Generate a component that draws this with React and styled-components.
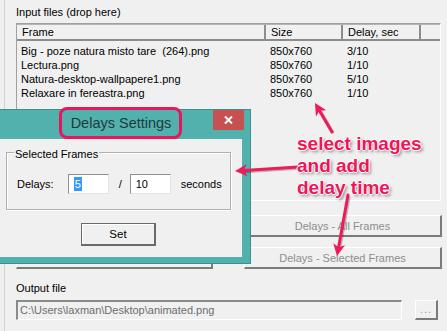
import React from 'react';
import styled, { createGlobalStyle } from 'styled-components';

const GlobalStyle = createGlobalStyle`
  html, body {
    margin: 0;
    padding: 0;
    background: #f0f0f0;
  }
  body {
    font-family: "Liberation Sans", Arial, sans-serif;
    font-size: 11px;
    color: #000;
  }
`;

const Page = styled.div`
  position: relative;
  width: 447px;
  height: 331px;
  overflow: hidden;
  background: #f0f0f0;
`;

const Panel = styled.div`
  margin-left: 4px;
  height: 331px;
  box-sizing: border-box;
  border-left: 1px solid #d3d3d3;
  padding: 6px 0 0 11px;
`;

const Label = styled.div`
  height: 13px;
  line-height: 13px;
  margin-top: ${p => p.$top || 0}px;
`;

const ListBox = styled.div`
  margin-top: 4px;
  width: 425px;
  height: 178px;
  box-sizing: border-box;
  border: 1px solid #fff;
  border-top-color: #a0a0a0;
  border-left-color: #a0a0a0;
`;

const cols = '249px 77px 78px 1fr';

const Header = styled.div`
  display: grid;
  grid-template-columns: ${cols};
  height: 17px;
  box-sizing: border-box;
  border-top: 1px solid #b4b4b4;
  border-bottom: 2px solid #8c8c8c;
`;

const HeadCell = styled.div`
  padding-left: 5px;
  line-height: 14px;
  border-right: ${p => (p.$last ? 'none' : '2px solid #8c8c8c')};
  white-space: nowrap;
`;

const Rows = styled.div`
  margin-top: 3px;
`;

const Row = styled.div`
  display: grid;
  grid-template-columns: ${cols};
  height: 14px;
  line-height: 14px;
`;

const Cell = styled.div`
  padding-left: 4px;
  white-space: pre;
`;

const ButtonGrid = styled.div`
  display: grid;
  grid-template-columns: 197px 198px;
  column-gap: 31px;
  row-gap: 10px;
  margin-top: 14px;
`;

const WinButton = styled.div`
  height: ${p => p.$h || 22}px;
  box-sizing: border-box;
  display: flex;
  align-items: center;
  justify-content: center;
  color: ${p => (p.$disabled ? '#8d8d8d' : '#000')};
  border-top: 1px solid #fff;
  border-left: 1px solid #fff;
  border-right: 2px solid #7a7a7a;
  border-bottom: 2px solid #7a7a7a;
  font-size: 11px;
`;

const OutputRow = styled.div`
  display: flex;
  gap: 13px;
  margin-top: 5px;
`;

const PathField = styled.div`
  width: 386px;
  height: 20px;
  box-sizing: border-box;
  border-top: 2px solid #8a8a8a;
  border-left: 2px solid #8a8a8a;
  border-right: 1px solid #fff;
  border-bottom: 1px solid #fff;
  color: #6d6d6d;
  line-height: 16px;
  padding-left: 2px;
`;

const DotsButton = styled(WinButton)`
  width: 23px;
  color: #9a9a9a;
  letter-spacing: 1px;
  padding-bottom: 2px;
`;

/* dialog window floating over the form */
const Dialog = styled.div`
  position: absolute;
  left: -10px;
  top: 109px;
  width: 261px;
  height: 155px;
  box-sizing: border-box;
  background: #52b0ad;
  border: 1px solid #3d8f8c;
  display: flex;
  flex-direction: column;
  z-index: 2;
`;

const TitleBar = styled.div`
  position: relative;
  height: 29px;
  display: flex;
  justify-content: center;
  align-items: flex-start;
`;

const Title = styled.div`
  margin-top: -3px;
  height: 32px;
  box-sizing: border-box;
  padding: 0 8px 0 9px;
  border: 3px solid #e8175d;
  border-radius: 8px;
  display: flex;
  align-items: center;
  font-size: 14.5px;
  color: #1f3a3b;
`;

const CloseButton = styled.div`
  position: absolute;
  right: 6px;
  top: 0;
  width: 31px;
  height: 20px;
  background: #c75050;
  display: flex;
  align-items: center;
  justify-content: center;
`;

const Client = styled.div`
  margin: 0 8px 6px 9px;
  height: 118px;
  background: #f0f0f0;
  display: flex;
  flex-direction: column;
`;

const Group = styled.div`
  position: relative;
  margin: 13px 11px 0 6px;
  height: 58px;
  box-sizing: border-box;
  border: 1px solid #b0b0b0;
  box-shadow: inset 1px 1px #fff, 1px 1px #fff;
  padding: 6px 0 0 10px;
  display: flex;
  align-items: center;
`;

const Legend = styled.div`
  position: absolute;
  top: -5px;
  left: 7px;
  padding: 0 1px;
  background: #f0f0f0;
  line-height: 13px;
`;

const FieldText = styled.span`
  margin-left: ${p => p.$ml || 0}px;
  font-size: 11px;
`;

const NumInput = styled.div`
  margin-left: ${p => p.$ml || 0}px;
  width: 41px;
  height: 20px;
  box-sizing: border-box;
  background: #fff;
  border: 1px solid #e3e3e3;
  border-top-color: #8f8f8f;
  border-left-color: #8f8f8f;
  padding-left: 5px;
  display: flex;
  align-items: center;
  font-size: 11px;
`;

const Selected = styled.span`
  background: #3399ff;
  color: #fff;
  padding: 1px 1px;
`;

const SetRow = styled.div`
  padding-left: 81px;
  margin-top: 13px;
`;

const SetButton = styled.div`
  width: 75px;
  height: 23px;
  box-sizing: border-box;
  border: 1px solid #6a6a6a;
  border-right-width: 2px;
  border-bottom-width: 2px;
  box-shadow: inset 1px 1px #fff;
  display: flex;
  align-items: center;
  justify-content: center;
  font-size: 11.5px;
`;

/* pink annotations drawn over the screenshot */
const Note = styled.div`
  position: absolute;
  left: 297px;
  top: 133px;
  font: bold 19px/22px "Liberation Sans", Arial, sans-serif;
  color: #f0145a;
  text-shadow: 1px 0 #fff, -1px 0 #fff, 0 1px #fff, 0 -1px #fff,
    2px 2px 3px rgba(0, 0, 0, 0.45);
  z-index: 4;
`;

const Overlay = styled.svg`
  position: absolute;
  left: 0;
  top: 0;
  z-index: 3;
  pointer-events: none;
`;

const files = [
  ['Big - poze natura misto tare  (264).png', '850x760', '3/10'],
  ['Lectura.png', '850x760', '1/10'],
  ['Natura-desktop-wallpapere1.png', '850x760', '5/10'],
  ['Relaxare in fereastra.png', '850x760', '1/10'],
];

const arrows = [
  [332, 132, 315, 103],
  [298, 167, 235, 171],
  [348, 195, 337, 256],
];

function Arrow({ x1, y1, x2, y2 }) {
  const len = Math.hypot(x2 - x1, y2 - y1);
  const ux = (x2 - x1) / len;
  const uy = (y2 - y1) / len;
  const bx = x2 - ux * 12;
  const by = y2 - uy * 12;
  const head = `${x2},${y2} ${bx - uy * 6},${by + ux * 6} ${bx + ux * 3},${by + uy * 3} ${bx + uy * 6},${by - ux * 6}`;
  return (
    <g>
      <line x1={x1 + 1} y1={y1 + 1} x2={bx + ux * 3 + 1} y2={by + uy * 3 + 1} stroke="rgba(0,0,0,0.25)" strokeWidth="3.5" />
      <line x1={x1} y1={y1} x2={bx + ux * 3} y2={by + uy * 3} stroke="#ee1a5a" strokeWidth="3" strokeLinecap="round" />
      <polygon points={head} fill="#ee1a5a" />
    </g>
  );
}

export default function App() {
  return (
    <Page>
      <GlobalStyle />
      <Panel>
        <Label>Input files (drop here)</Label>
        <ListBox>
          <Header>
            <HeadCell>Frame</HeadCell>
            <HeadCell>Size</HeadCell>
            <HeadCell>Delay, sec</HeadCell>
            <HeadCell $last />
          </Header>
          <Rows>
            {files.map(f => (
              <Row key={f[0]}>
                <Cell>{f[0]}</Cell>
                <Cell>{f[1]}</Cell>
                <Cell>{f[2]}</Cell>
              </Row>
            ))}
          </Rows>
        </ListBox>

        <ButtonGrid>
          <WinButton $disabled />
          <WinButton $disabled>Delays - All Frames</WinButton>
          <WinButton $disabled />
          <WinButton $disabled>Delays - Selected Frames</WinButton>
        </ButtonGrid>

        <Label $top={13}>Output file</Label>
        <OutputRow>
          <PathField>C:\Users\laxman\Desktop\animated.png</PathField>
          <DotsButton $h={20} $disabled>...</DotsButton>
        </OutputRow>
      </Panel>

      <Dialog>
        <TitleBar>
          <Title>Delays Settings</Title>
          <CloseButton>
            <svg width="9" height="8" viewBox="0 0 9 8">
              <path d="M1 0.5 L8 7.5 M8 0.5 L1 7.5" stroke="#fff" strokeWidth="2" />
            </svg>
          </CloseButton>
        </TitleBar>
        <Client>
          <Group>
            <Legend>Selected Frames</Legend>
            <FieldText>Delays:</FieldText>
            <NumInput $ml={14}>
              <Selected>5</Selected>
            </NumInput>
            <FieldText $ml={10}>/</FieldText>
            <NumInput $ml={8}>10</NumInput>
            <FieldText $ml={10}>seconds</FieldText>
          </Group>
          <SetRow>
            <SetButton>Set</SetButton>
          </SetRow>
        </Client>
      </Dialog>

      <Overlay width="447" height="331">
        {arrows.map(([x1, y1, x2, y2], i) => (
          <Arrow key={i} x1={x1} y1={y1} x2={x2} y2={y2} />
        ))}
      </Overlay>
      <Note>
        select images
        <br />
        and add
        <br />
        delay time
      </Note>
    </Page>
  );
}
